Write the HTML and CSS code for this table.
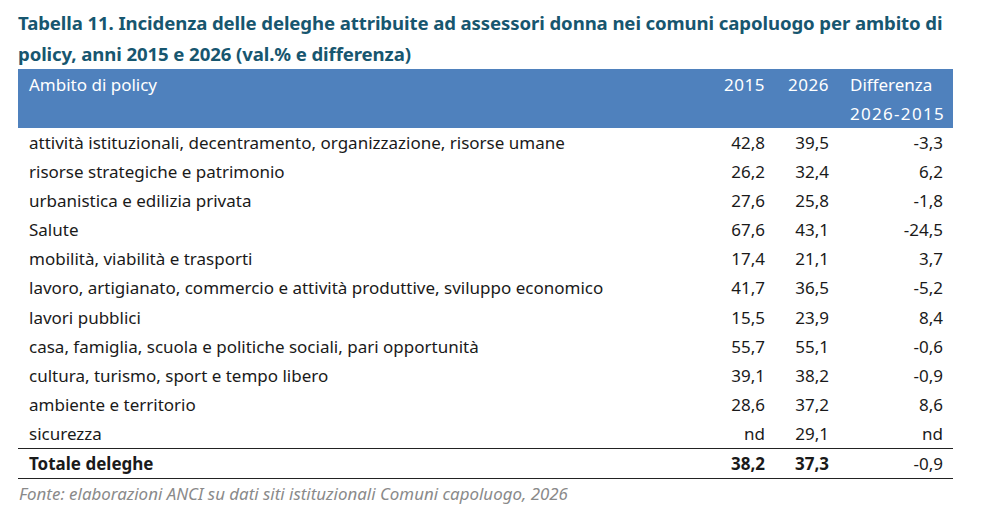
FILE: index.html
```html
<!DOCTYPE html>
<html lang="it">
<head>
<meta charset="utf-8">
<title>Tabella 11</title>
<link rel="stylesheet" href="styles.css">
</head>
<body>
<div class="wrap">
  <h1 class="title">Tabella 11. Incidenza delle deleghe attribuite ad assessori donna nei comuni capoluogo per ambito di policy, anni 2015 e 2026 (val.% e differenza)</h1>
  <table class="tbl">
    <colgroup>
      <col class="c-name"><col class="c-y1"><col class="c-y2"><col class="c-diff">
    </colgroup>
    <thead>
      <tr>
        <th class="name">Ambito di policy</th>
        <th class="num">2015</th>
        <th class="num">2026</th>
        <th class="diff">Differenza<br><span class="range">2026-2015</span></th>
      </tr>
    </thead>
    <tbody>
      <tr><td class="name">attività istituzionali, decentramento, organizzazione, risorse umane</td><td class="num">42,8</td><td class="num">39,5</td><td class="num">-3,3</td></tr>
      <tr><td class="name">risorse strategiche e patrimonio</td><td class="num">26,2</td><td class="num">32,4</td><td class="num">6,2</td></tr>
      <tr><td class="name">urbanistica e edilizia privata</td><td class="num">27,6</td><td class="num">25,8</td><td class="num">-1,8</td></tr>
      <tr><td class="name">Salute</td><td class="num">67,6</td><td class="num">43,1</td><td class="num">-24,5</td></tr>
      <tr><td class="name">mobilità, viabilità e trasporti</td><td class="num">17,4</td><td class="num">21,1</td><td class="num">3,7</td></tr>
      <tr><td class="name">lavoro, artigianato, commercio e attività produttive, sviluppo economico</td><td class="num">41,7</td><td class="num">36,5</td><td class="num">-5,2</td></tr>
      <tr><td class="name">lavori pubblici</td><td class="num">15,5</td><td class="num">23,9</td><td class="num">8,4</td></tr>
      <tr><td class="name">casa, famiglia, scuola e politiche sociali, pari opportunità</td><td class="num">55,7</td><td class="num">55,1</td><td class="num">-0,6</td></tr>
      <tr><td class="name">cultura, turismo, sport e tempo libero</td><td class="num">39,1</td><td class="num">38,2</td><td class="num">-0,9</td></tr>
      <tr><td class="name">ambiente e territorio</td><td class="num">28,6</td><td class="num">37,2</td><td class="num">8,6</td></tr>
      <tr><td class="name">sicurezza</td><td class="num">nd</td><td class="num">29,1</td><td class="num">nd</td></tr>
      <tr class="total"><td class="name">Totale deleghe</td><td class="num">38,2</td><td class="num">37,3</td><td class="num plain">-0,9</td></tr>
    </tbody>
  </table>
  <p class="source">Fonte: elaborazioni ANCI su dati siti istituzionali Comuni capoluogo, 2026</p>
</div>
</body>
</html>
```

FILE: styles.css
```css
* { box-sizing: border-box; }
html, body { margin: 0; padding: 0; background: #fff; }
body {
  font-family: "Noto Sans", "Open Sans", sans-serif;
  color: #1a1a1a;
}
.wrap {
  width: 935px;
  margin-left: 18px;
  padding-top: 7px;
}
.title {
  margin: 0;
  font-size: 18.6px;
  font-weight: 700;
  line-height: 31px;
  color: #17566f;
  letter-spacing: -0.1px;
}
.tbl {
  width: 935px;
  border-collapse: collapse;
  table-layout: fixed;
  font-size: 17px;
}
.c-name { width: 682px; }
.c-y1 { width: 75px; }
.c-y2 { width: 64px; }
.c-diff { width: 114px; }
.tbl thead th {
  background: #4f81bd;
  color: #fff;
  font-weight: 400;
  vertical-align: top;
  line-height: 29px;
  padding: 1px 0 0 0;
}
.tbl thead th.name { text-align: left; padding-left: 11px; height: 58px; }
.tbl thead th.num { text-align: right; padding-right: 10px; letter-spacing: 0.5px; }
.tbl thead th.diff { text-align: left; padding-left: 11px; white-space: nowrap; }
.tbl thead th.diff .range { letter-spacing: 1.3px; }
.tbl td {
  height: 29.1px;
  line-height: 27.1px;
  padding: 1px 0 1px 0;
  white-space: nowrap;
}
.tbl td.name { padding-left: 11px; }
.tbl td.num { text-align: right; padding-right: 10px; }
.tbl tr.total td {
  border-top: 1.5px solid #222;
  border-bottom: 1.5px solid #222;
  font-weight: 700;
}
.tbl tr.total td.plain { font-weight: 400; }
.source {
  margin: 1px 0 0 1px;
  font-style: italic;
  font-size: 16.9px;
  color: #8a8a8a;
  line-height: 28px;
}
```
